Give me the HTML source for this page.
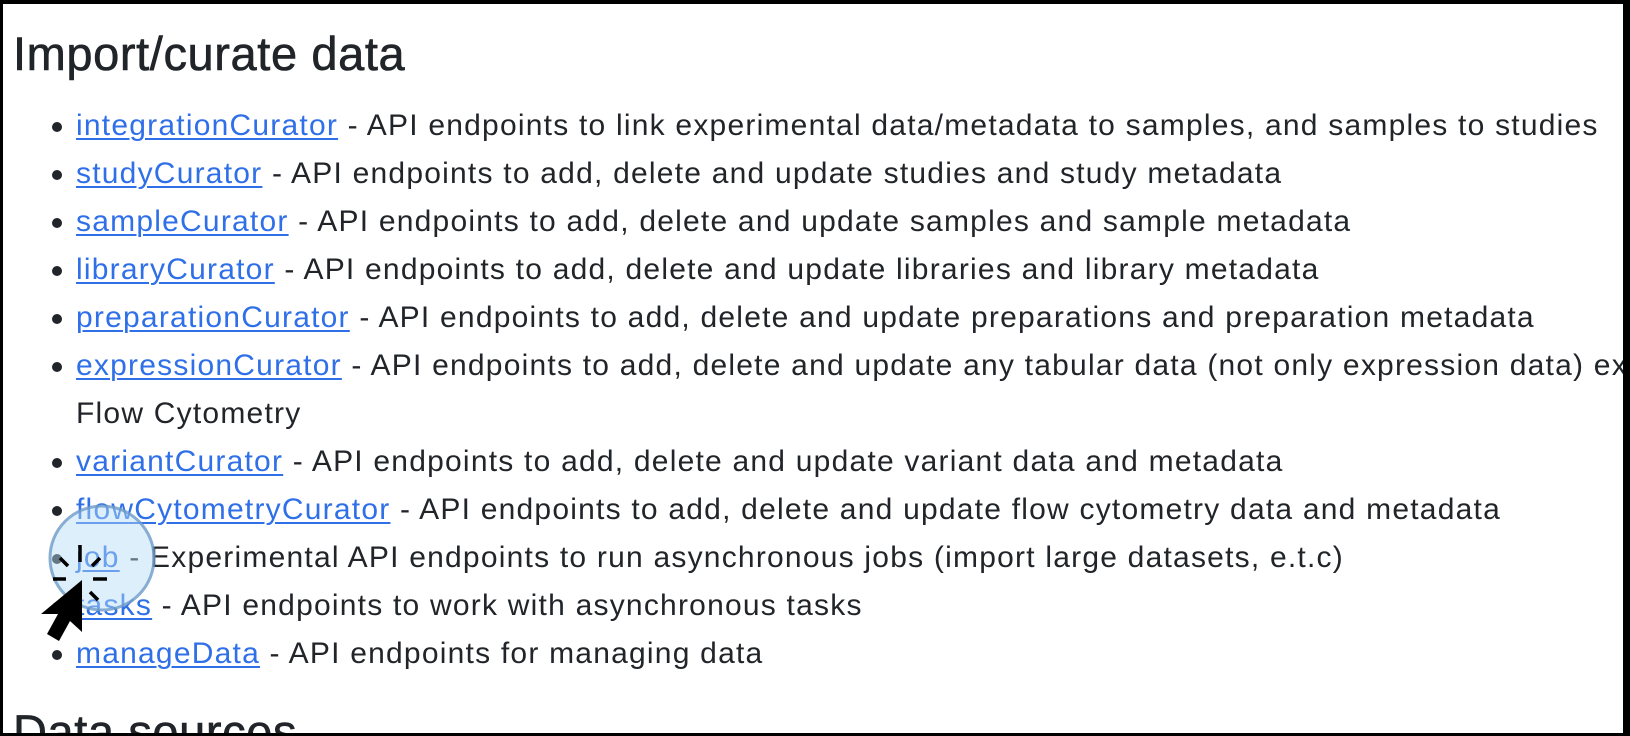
<!DOCTYPE html>
<html><head><meta charset="utf-8"><style>
html,body{margin:0;padding:0;width:1630px;height:736px;overflow:hidden;background:#fff;}
.frame{position:absolute;left:0;top:0;width:1630px;height:736px;box-sizing:border-box;border-top:4px solid #000;border-left:3px solid #000;border-bottom:3px solid #000;border-right:7px solid #000;}
.c{position:absolute;left:3px;top:4px;right:7px;bottom:3px;overflow:hidden;font-family:"Liberation Sans",sans-serif;color:#212529;}
h1{position:absolute;left:10px;top:22px;margin:0;font-size:47px;font-weight:normal;white-space:nowrap;letter-spacing:0.6px;-webkit-text-stroke:0.6px #212529;}
.l{position:absolute;left:73px;font-size:30px;letter-spacing:1.22px;white-space:nowrap;line-height:48px;}
.l::before{content:"";position:absolute;left:-24px;top:20px;width:10px;height:10px;border-radius:50%;background:#212529;}
.n::before{display:none;}
a{color:#2f6fe8;text-decoration:underline;text-decoration-thickness:2px;text-underline-offset:3px;}
</style></head><body>
<div class="frame"></div>
<div class="c">
<h1>Import/curate data</h1>
<div class="l" style="top:98px"><a>integrationCurator</a> - API endpoints to link experimental data/metadata to samples, and samples to studies</div>
<div class="l" style="top:146px"><a>studyCurator</a> - API endpoints to add, delete and update studies and study metadata</div>
<div class="l" style="top:194px"><a>sampleCurator</a> - API endpoints to add, delete and update samples and sample metadata</div>
<div class="l" style="top:242px"><a>libraryCurator</a> - API endpoints to add, delete and update libraries and library metadata</div>
<div class="l" style="top:290px"><a>preparationCurator</a> - API endpoints to add, delete and update preparations and preparation metadata</div>
<div class="l" style="top:338px"><a>expressionCurator</a> - API endpoints to add, delete and update any tabular data (not only expression data) except</div>
<div class="l n" style="top:386px">Flow Cytometry</div>
<div class="l" style="top:434px"><a>variantCurator</a> - API endpoints to add, delete and update variant data and metadata</div>
<div class="l" style="top:482px"><a>flowCytometryCurator</a> - API endpoints to add, delete and update flow cytometry data and metadata</div>
<div class="l" style="top:530px"><a>job</a> - Experimental API endpoints to run asynchronous jobs (import large datasets, e.t.c)</div>
<div class="l" style="top:578px"><a>tasks</a> - API endpoints to work with asynchronous tasks</div>
<div class="l" style="top:626px"><a>manageData</a> - API endpoints for managing data</div>
<h1 style="top:700px">Data sources</h1>
</div>
<svg style="position:absolute;left:0;top:0" width="1630" height="736">
<circle cx="102" cy="558" r="52" fill="rgba(180,220,245,0.45)" stroke="rgba(110,155,200,0.8)" stroke-width="3"/>
<g stroke="#000" stroke-width="3.5" stroke-linecap="butt">
<line x1="80" y1="545" x2="80" y2="562"/>
<line x1="60" y1="558" x2="68" y2="566"/>
<line x1="100" y1="558" x2="92" y2="566"/>
<line x1="53" y1="579" x2="66" y2="579"/>
<line x1="93" y1="579" x2="107" y2="579"/>
<line x1="90" y1="592" x2="98" y2="600"/>
</g>
<path d="M82 580 L82 632 L70 621 L59 641 L47 634 L58 614 L41 614 Z" fill="#000"/>
</svg>
</body></html>
